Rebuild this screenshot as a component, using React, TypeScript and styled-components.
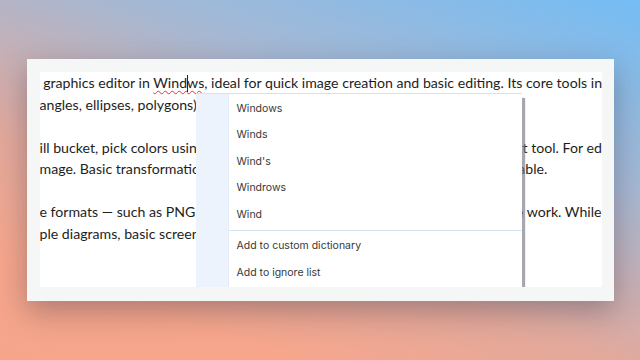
import styled, { createGlobalStyle } from "styled-components";

const GlobalStyle = createGlobalStyle`
  html, body {
    margin: 0;
    padding: 0;
  }
  body {
    width: 640px;
    height: 360px;
    overflow: hidden;
  }
`;

const suggestions = ["Windows", "Winds", "Wind's", "Windrows", "Wind"];
const actions = ["Add to custom dictionary", "Add to ignore list"];

const App = () => {
  return (
    <Page>
      <GlobalStyle />
      <Card>
        <Editor>
          <Paragraph>
            <Line>
              {" "}graphics editor in{" "}
              <Misspelled>
                Wind
                <Caret />
                ws
              </Misspelled>
              , ideal for quick image creation and basic editing. Its core tools include
            </Line>
            <Line>angles, ellipses, polygons), a pencil, brushes and an eraser.</Line>
          </Paragraph>
          <Paragraph>
            <Line>
              ill bucket, pick colors using the color picker and add brief captions with the text tool. For editing
            </Line>
            <Line>
              mage. Basic transformations such as flip, rotate, trim and stretch are also available.
            </Line>
          </Paragraph>
          <Paragraph>
            <Line>
              e formats — such as PNG, JPEG, BMP and GIF — so it fits most everyday office work. While
            </Line>
            <Line>ple diagrams, basic screenshots and quick sketches.</Line>
          </Paragraph>

          <Menu>
            <Gutter />
            <MenuList>
              {suggestions.map((s) => (
                <MenuItem key={s}>{s}</MenuItem>
              ))}
              <Separator />
              {actions.map((a) => (
                <MenuItem key={a}>{a}</MenuItem>
              ))}
              <Separator />
            </MenuList>
          </Menu>
        </Editor>
      </Card>
    </Page>
  );
};

export default App;

const Page = styled.div`
  display: flex;
  align-items: center;
  justify-content: center;

  width: 640px;
  height: 360px;

  background: linear-gradient(200deg, #74bdf5 0%, #a6b8d3 32%, #e2a99c 62%, #f6a68c 82%, #f5a58b 100%);
`;

const Card = styled.div`
  display: flex;
  padding: 13px 12px 14px 13px;

  width: 587px;
  height: 242px;
  box-sizing: border-box;

  background: #f5f7f7;
  box-shadow: 0 10px 28px rgba(40, 40, 60, 0.35);
`;

const Editor = styled.div`
  position: relative;
  flex: 1;
  overflow: hidden;

  background: #ffffff;

  font-family: "Lato", "Open Sans", sans-serif;
  font-size: 14.15px;
  line-height: 21.5px;
  color: #1e1e1e;
`;

const Paragraph = styled.div`
  margin-bottom: 21.5px;
`;

const Line = styled.div`
  white-space: pre;
`;

const Misspelled = styled.span`
  text-decoration: underline wavy #e0393e;
  text-decoration-thickness: 1px;
  text-underline-offset: 2px;
`;

const Caret = styled.span`
  display: inline-block;
  width: 1px;
  height: 17px;
  margin-right: -1px;
  vertical-align: -4px;
  background: #222;
`;

const Menu = styled.div`
  position: absolute;
  left: 156px;
  top: 21px;
  display: flex;

  width: 326px;
  height: 260px;

  background: #ffffff;
  border-top: 1px solid #d3e2f4;
  box-shadow: 3px 5px 1px rgba(120, 120, 130, 0.65);

  font-family: "Inter", "Noto Sans", sans-serif;
  font-size: 10.5px;
  color: #383838;
`;

const Gutter = styled.div`
  width: 32px;
  flex-shrink: 0;
  background: #ecf3fd;
  border-right: 1px solid #e3ecf8;
`;

const MenuList = styled.div`
  display: flex;
  flex-direction: column;
  flex: 1;
  padding-top: 1px;
`;

const MenuItem = styled.div`
  display: flex;
  align-items: center;
  padding-left: 8px;
  height: 26.5px;
`;

const Separator = styled.div`
  height: 1px;
  margin: 2px 0;
  background: #d8e4f3;
`;
